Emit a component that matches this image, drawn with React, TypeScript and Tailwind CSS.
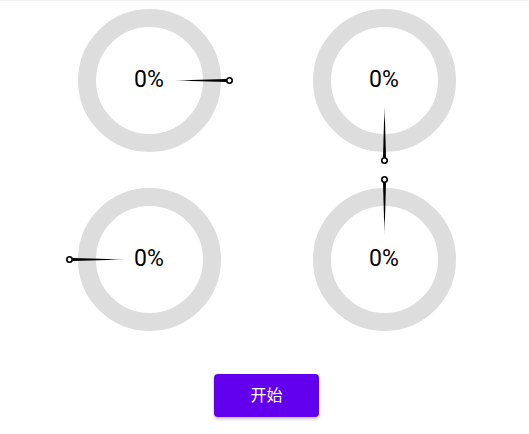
import React from 'react';

interface GaugeProps {
  id: string;
  angle: number;
  value: number;
}

const Gauge: React.FC<GaugeProps> = ({ id, angle, value }) => (
  <div className="relative w-[143px] h-[143px] flex items-center justify-center">
    <svg className="absolute inset-0" width="143" height="143" viewBox="0 0 143 143">
      <circle cx="71.5" cy="71.5" r="62.5" fill="none" stroke="#dddddd" strokeWidth="18" />
    </svg>
    <span className="relative text-[23px] text-black font-['Roboto',sans-serif]">{value}%</span>
    {/* needle sits over the ring */}
    <svg className="absolute inset-0 overflow-visible" width="143" height="143" viewBox="0 0 143 143">
      <defs>
        <linearGradient id={id} gradientUnits="userSpaceOnUse" x1="92" y1="0" x2="114" y2="0">
          <stop offset="0" stopColor="#000" stopOpacity="0" />
          <stop offset="1" stopColor="#000" stopOpacity="1" />
        </linearGradient>
      </defs>
      <g transform={`rotate(${angle} 71.5 71.5)`}>
        <polygon points="95,71.5 148.5,70 148.5,73" fill={`url(#${id})`} />
        <circle cx="151.5" cy="71.5" r="2.7" fill="#fff" stroke="#000" strokeWidth="1.6" />
      </g>
    </svg>
  </div>
);

export default function App() {
  const gauges = [
    { id: 'g1', angle: 0 },
    { id: 'g2', angle: 90 },
    { id: 'g3', angle: 180 },
    { id: 'g4', angle: 270 },
  ];

  return (
    <div className="w-[529px] h-[434px] bg-white border-t border-[#f2f2f2] flex flex-col items-center pl-1 pt-[8px] font-['Roboto',sans-serif]">
      <div className="grid grid-cols-2 gap-x-[92px] gap-y-[36px]">
        {gauges.map(g => (
          <Gauge key={g.id} id={g.id} angle={g.angle} value={0} />
        ))}
      </div>
      <button className="mt-[43px] w-[105px] h-[43px] rounded-[4px] bg-[#6200ee] text-white text-[16px] shadow-[0_2px_3px_rgba(0,0,0,0.25)] font-['Roboto','Noto_Sans_CJK_SC',sans-serif]">
        开始
      </button>
    </div>
  );
}
